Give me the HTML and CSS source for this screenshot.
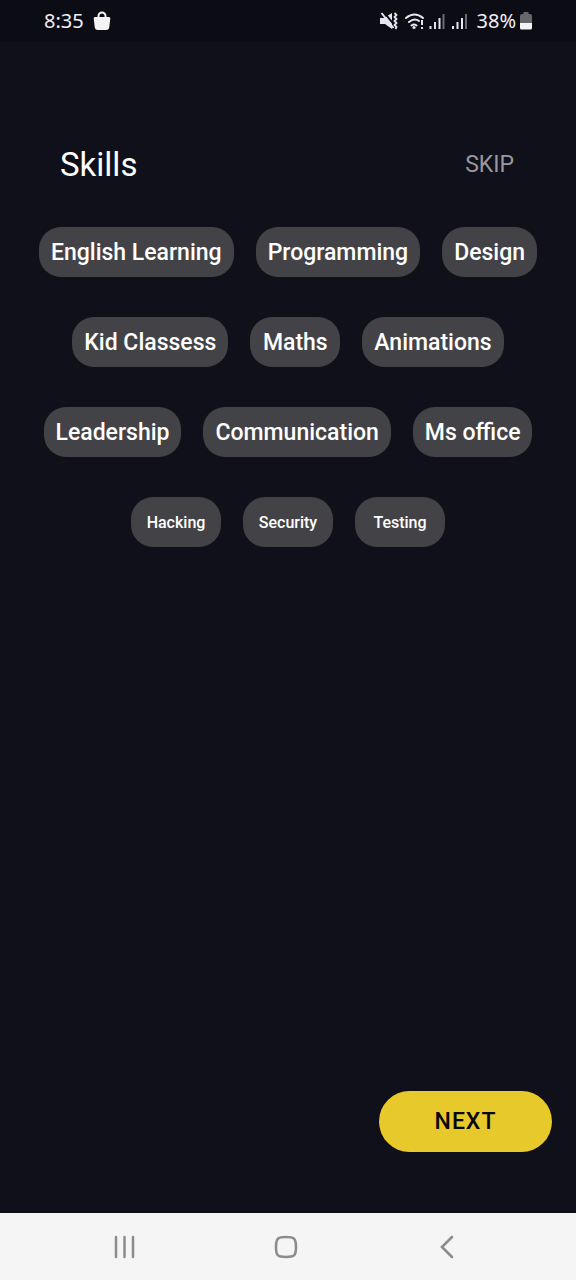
FILE: index.html
```html
<!DOCTYPE html>
<html lang="en">
<head>
<meta charset="utf-8">
<meta name="viewport" content="width=device-width, initial-scale=1">
<title>Skills</title>
<link rel="stylesheet" href="styles.css">
</head>
<body>
<div class="screen">
  <div class="status">
    <div class="status-group">
      <span class="status-text">8:35</span>
      <svg class="bag" width="18" height="20" viewBox="0 0 18 20" aria-hidden="true"><path d="M5.500 8V5a3.500 3.500 0 0 1 7 0v3" fill="none" stroke="#f4f4f6" stroke-width="2"/><path d="M2 6h14q1.500 0 1.300 1.500L16.300 16q-.4 3-3 3H4.700q-2.600 0-3-3L.7 7.500Q.5 6 2 6z" fill="#f4f4f6"/></svg>
    </div>
    <div class="status-group">
      <svg width="90" height="20" viewBox="0 0 90 20" aria-hidden="true">
        <path d="M0 7h4l8-5v16l-7-5H0z" fill="#e6e6ea"/>
        <path d="M3 0l12 15" stroke="#0c0c14" stroke-width="2"/>
        <path d="M1.500 2l12 15" stroke="#e6e6ea" stroke-width="2"/>
        <path d="M14.500 2l2 2-2 2 2 2-2 2 2 2-2 2 2 2-1 2" fill="none" stroke="#e6e6ea" stroke-width="1.800"/>
        <g fill="none" stroke="#e6e6ea" stroke-width="2" stroke-linecap="round"><path d="M26 7q8.500-7 17 0M29 11q5.500-4.500 10 -1M31.500 14.500q2.500-2 5 0"/></g>
        <circle cx="34" cy="16.500" r="1.600" fill="#e6e6ea"/>
        <path d="M42 9v5M42 16v2" stroke="#e6e6ea" stroke-width="2"/>
        <g stroke="#e6e6ea" stroke-width="2"><path d="M50.500 15v3M55 11v7M59.500 7v11M73 15v3M77.500 11v7M82 7v11"/></g>
        <path d="M63.500 3v15M86 3v15" stroke="#6a6a70" stroke-width="2"/>
      </svg>
      <span class="status-text percent">38%</span>
      <svg class="battery" width="12" height="18" viewBox="0 0 12 18" aria-hidden="true"><path d="M3.500 0h5v2H10q2 0 2 2v7H0V4q0-2 2-2h1.500z" fill="#66666d"/><path d="M0 11h12v5q0 1.500-1.500 1.500h-9Q0 17.500 0 16z" fill="#f4f4f6"/></svg>
    </div>
  </div>

  <main class="content">
    <header class="heading">
      <h1 class="title">Skills</h1>
      <button class="skip" type="button">SKIP</button>
    </header>
    <div class="chips">
      <button class="chip" type="button">English Learning</button>
      <button class="chip" type="button">Programming</button>
      <button class="chip" type="button">Design</button>
      <button class="chip" type="button">Kid Classess</button>
      <button class="chip" type="button">Maths</button>
      <button class="chip" type="button">Animations</button>
      <button class="chip" type="button">Leadership</button>
      <button class="chip" type="button">Communication</button>
      <button class="chip" type="button">Ms office</button>
      <button class="chip chip-small" type="button">Hacking</button>
      <button class="chip chip-small" type="button">Security</button>
      <button class="chip chip-small" type="button">Testing</button>
    </div>
    <button class="next" type="button">NEXT</button>
  </main>

  <nav class="navbar">
    <button class="nav-button" type="button" aria-label="Recent apps"><svg width="24" height="24" viewBox="0 0 24 24"><path d="M3 2v20M11.500 2v20M20 2v20" stroke="#8c8c8c" stroke-width="2.500" stroke-linecap="round"/></svg></button>
    <button class="nav-button" type="button" aria-label="Home"><svg width="24" height="24" viewBox="0 0 24 24"><path d="M12 2c8.500 0 10 1.500 10 10s-1.500 10-10 10S2 20.500 2 12 3.500 2 12 2z" fill="none" stroke="#8c8c8c" stroke-width="2.600"/></svg></button>
    <button class="nav-button" type="button" aria-label="Back"><svg width="24" height="24" viewBox="0 0 24 24"><path d="M17 2L7 12l10 10" fill="none" stroke="#8c8c8c" stroke-width="2.600" stroke-linecap="round"/></svg></button>
  </nav>
</div>
</body>
</html>
```
FILE: styles.css
```css
* {
  box-sizing: border-box;
}

body {
  margin: 0;
  background: #10101a;
  color: #fff;
  font-family: Roboto, "Liberation Sans", sans-serif;
}

button {
  border: 0;
  padding: 0;
  background: none;
  color: inherit;
  font-family: inherit;
  cursor: pointer;
}

svg {
  display: block;
}

.screen {
  display: flex;
  flex-direction: column;
  min-height: 100vh;
}

.status {
  display: flex;
  justify-content: space-between;
  padding: 0 44px;
  height: 42px;
  background: #0c0c14;
}

.status-group {
  display: flex;
  align-items: center;
}

.status-text {
  font-family: "Noto Sans", sans-serif;
  font-size: 20px;
  line-height: 24px;
  color: #f0f0f4;
}

.bag {
  margin-left: 9px;
}

.percent {
  margin-left: 7px;
}

.battery {
  margin-left: 4px;
}

.content {
  display: flex;
  flex: 1;
  flex-direction: column;
  padding: 102px 24px 61px;
}

.heading {
  display: flex;
  align-items: center;
  justify-content: space-between;
  padding: 0 38px 0 36px;
}

.title {
  margin: 0;
  font-size: 33px;
  font-weight: 400;
  line-height: 40px;
}

.skip {
  color: #98989c;
  font-size: 23px;
  line-height: 42px;
}

.chips {
  display: flex;
  flex-wrap: wrap;
  justify-content: center;
  gap: 40px 22px;
  margin-top: 41px;
}

.chip {
  min-width: 90px;
  height: 50px;
  padding: 0 12px;
  border-radius: 22px;
  background: #434347;
  font-size: 23px;
  font-weight: 500;
}

.chip-small {
  font-size: 16px;
}

.next {
  align-self: flex-end;
  width: 173px;
  height: 61px;
  margin-top: auto;
  border-radius: 31px;
  background: #e7c92c;
  color: #08080c;
  font-size: 23px;
  font-weight: 500;
  letter-spacing: 1px;
}

.navbar {
  display: flex;
  align-items: center;
  justify-content: space-around;
  height: 67px;
  padding: 0 48px 0 44px;
  background: #f5f5f5;
}

.nav-button {
  padding: 12px;
}
```
